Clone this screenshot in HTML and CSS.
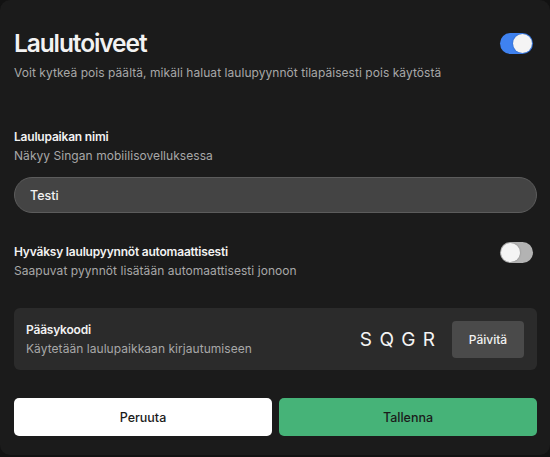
FILE: index.html
```html
<!DOCTYPE html>
<html lang="fi">
<head>
    <meta charset="UTF-8">
    <meta name="viewport" content="width=device-width, initial-scale=1.0">
    <title>Laulutoiveet</title>
    <link rel="stylesheet" href="styles.css">
</head>
<body>
    <div class="panel">
        <div class="header">
            <div class="header-row">
                <h1>Laulutoiveet</h1>
                <span class="switch on"></span>
            </div>
            <p class="hint">Voit kytkeä pois päältä, mikäli haluat laulupyynnöt tilapäisesti pois käytöstä</p>
        </div>

        <div class="field">
            <div class="label">Laulupaikan nimi</div>
            <p class="hint">Näkyy Singan mobiilisovelluksessa</p>
            <input type="text" class="text-input" value="Testi">
        </div>

        <div class="setting">
            <div>
                <div class="label">Hyväksy laulupyynnöt automaattisesti</div>
                <p class="hint">Saapuvat pyynnöt lisätään automaattisesti jonoon</p>
            </div>
            <span class="switch"></span>
        </div>

        <div class="code-card">
            <div>
                <div class="label">Pääsykoodi</div>
                <p class="hint">Käytetään laulupaikkaan kirjautumiseen</p>
            </div>
            <div class="code-right">
                <span class="code">S Q G R</span>
                <button class="refresh">Päivitä</button>
            </div>
        </div>

        <div class="actions">
            <button class="btn cancel">Peruuta</button>
            <button class="btn save">Tallenna</button>
        </div>
    </div>
</body>
</html>
```

FILE: styles.css
```css
body {
    margin: 0;
    background-color: #121212;
    font-family: Inter, "Noto Sans", sans-serif;
    color: #f2f2f2;
}

.panel {
    background-color: #1b1b1b;
    height: 455px;
    box-sizing: border-box;
    border-radius: 10px;
    padding: 26px 13px 0 14px;
}

.header-row {
    display: flex;
    justify-content: space-between;
    align-items: center;
}

h1 {
    margin: 0;
    font-size: 24.5px;
    font-weight: 600;
    line-height: 34px;
    letter-spacing: -1.1px;
}

.hint {
    margin: 0;
    font-size: 12px;
    line-height: 19px;
    letter-spacing: 0.05px;
    color: #a8a8a8;
}

.header .hint {
    margin-top: 3px;
}

.label {
    font-size: 12px;
    font-weight: 600;
    line-height: 19px;
    letter-spacing: -0.2px;
    color: #f2f2f2;
}

.switch {
    position: relative;
    display: inline-block;
    width: 33px;
    height: 21px;
    border-radius: 11px;
    background-color: #b3b3b3;
    margin-right: 4px;
}

.switch::after {
    content: "";
    position: absolute;
    top: 1px;
    left: 1px;
    width: 19px;
    height: 19px;
    border-radius: 50%;
    background-color: #f4f4f4;
    box-shadow: 0 0 2px rgba(0, 0, 0, 0.3);
}

.switch.on {
    background-color: #3f82f0;
}

.switch.on::after {
    left: 13px;
}

.field {
    margin-top: 45px;
}

.text-input {
    display: block;
    box-sizing: border-box;
    width: 100%;
    height: 36px;
    margin-top: 12px;
    padding: 0 15px;
    border: 1px solid #5c5c5c;
    border-radius: 18px;
    background-color: #444444;
    color: #f2f2f2;
    font-family: inherit;
    font-size: 12.5px;
    font-weight: 500;
}

.setting {
    display: flex;
    justify-content: space-between;
    align-items: flex-start;
    margin-top: 29px;
}

.code-card {
    display: flex;
    justify-content: space-between;
    align-items: center;
    margin-top: 28px;
    height: 62px;
    box-sizing: border-box;
    padding: 0 13px 0 12px;
    background-color: #2b2b2b;
    border-radius: 6px;
}

.code-right {
    display: flex;
    align-items: center;
    gap: 16px;
}

.code {
    font-size: 19px;
    font-weight: 400;
    letter-spacing: 1px;
    color: #f4f4f4;
}

.refresh {
    height: 37px;
    width: 72px;
    border: none;
    border-radius: 4px;
    background-color: #4a4a4a;
    color: #f2f2f2;
    font-family: inherit;
    font-size: 12px;
    font-weight: 500;
}

.actions {
    display: flex;
    gap: 7px;
    margin-top: 28px;
}

.btn {
    flex: 1;
    height: 38px;
    border: none;
    border-radius: 5px;
    font-family: inherit;
    font-size: 12.5px;
    font-weight: 500;
    color: #1b1b1b;
}

.cancel {
    background-color: #ffffff;
}

.save {
    background-color: #46b378;
}
```
